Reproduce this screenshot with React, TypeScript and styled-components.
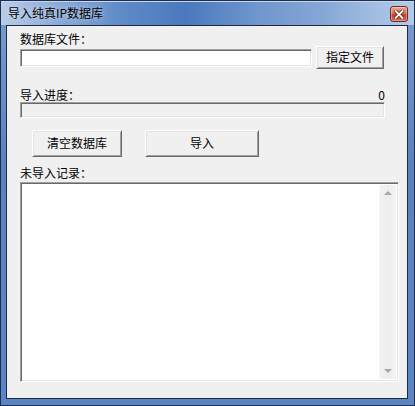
import React from "react";
import styled, { createGlobalStyle } from "styled-components";

const GlobalStyle = createGlobalStyle`
  html, body {
    margin: 0;
    padding: 0;
    background: #ffffff;
  }
  body {
    font-family: "Noto Sans CJK SC", "Liberation Sans", sans-serif;
    font-size: 12px;
    color: #000;
  }
`;

const sunken = `
  border: 1px solid;
  border-color: #a0a0a0 #ffffff #ffffff #a0a0a0;
  box-shadow: inset 1px 1px 0 #696969, inset -1px -1px 0 #e3e3e3;
`;

const Window = styled.div`
  width: 415px;
  height: 406px;
  box-sizing: border-box;
  border: 1px solid #1d2f4c;
  display: flex;
  flex-direction: column;
  background: linear-gradient(180deg, #7b9dd0 0%, #5a82bf 40%, #5b84c2 100%);
`;

const TitleBar = styled.div`
  height: 24px;
  flex: none;
  display: flex;
  align-items: center;
  justify-content: space-between;
  padding: 0 6px 0 7px;
  box-shadow: inset 0 1px 0 #c6d7ef;
  background: linear-gradient(
    90deg,
    #b8cce9 0%,
    #8fadd9 12%,
    #5d89c6 30%,
    #4a7abd 45%,
    #6f96cd 62%,
    #86a7d6 78%,
    #a6bfe3 92%,
    #b3c9e8 100%
  );
`;

const Title = styled.span`
  font-size: 12px;
  line-height: 14px;
  color: #000;
  text-shadow: 0 0 6px rgba(255, 255, 255, 0.7);
`;

const CloseButton = styled.div`
  width: 18px;
  height: 16px;
  margin-top: 2px;
  box-sizing: border-box;
  border: 1px solid #6e2a1e;
  border-radius: 3px;
  display: flex;
  align-items: center;
  justify-content: center;
  background: linear-gradient(180deg, #e9a894 0%, #d6715a 45%, #c2412a 55%, #d8674b 100%);
  box-shadow: inset 0 0 0 1px rgba(255, 255, 255, 0.35);
`;

const Body = styled.div`
  flex: 1;
  margin: 0 6px 6px 5px;
  border: 1px solid #1b2b46;
  background: #f0f0f0;
  display: flex;
  flex-direction: column;
  padding: 6px 0 0 13px;
`;

const Label = styled.div<{ $top?: number }>`
  line-height: 14px;
  height: 14px;
  margin-top: ${(p) => p.$top ?? 0}px;
  white-space: nowrap;
`;

const FileRow = styled.div`
  display: flex;
  align-items: center;
  gap: 4px;
  height: 23px;
`;

const TextField = styled.div`
  width: 292px;
  height: 18px;
  box-sizing: border-box;
  background: #ffffff;
  ${sunken}
`;

const Button = styled.div<{ $w: number; $h: number }>`
  width: ${(p) => p.$w}px;
  height: ${(p) => p.$h}px;
  box-sizing: border-box;
  display: flex;
  align-items: center;
  justify-content: center;
  background: #f0f0f0;
  border: 1px solid;
  border-color: #ffffff #696969 #696969 #ffffff;
  box-shadow: inset 1px 1px 0 #e3e3e3, inset -1px -1px 0 #a0a0a0;
  line-height: 14px;
  padding-bottom: 1px;
`;

const ProgressHeader = styled.div`
  width: 365px;
  display: flex;
  justify-content: space-between;
  line-height: 14px;
  height: 14px;
  margin-top: 19px;
`;

const ProgressBar = styled.div`
  width: 365px;
  height: 16px;
  box-sizing: border-box;
  background: #f0f0f0;
  ${sunken}
`;

const ButtonRow = styled.div`
  display: flex;
  gap: 23px;
  margin: 12px 0 0 12px;
`;

const LogBox = styled.div`
  width: 379px;
  height: 200px;
  margin-top: 2px;
  box-sizing: border-box;
  display: flex;
  padding: 2px;
  background: #ffffff;
  ${sunken}
`;

const LogArea = styled.div`
  flex: 1;
  background: #ffffff;
`;

const ScrollBar = styled.div`
  width: 17px;
  display: flex;
  flex-direction: column;
  justify-content: space-between;
  align-items: center;
  padding: 6px 0 6px;
  box-sizing: border-box;
  background: linear-gradient(90deg, #f2f2f2 0%, #ececec 50%, #f4f4f4 100%);
  border-left: 1px solid #f7f7f7;
`;

const Arrow = styled.div<{ $down?: boolean }>`
  width: 0;
  height: 0;
  border-left: 4px solid transparent;
  border-right: 4px solid transparent;
  ${(p) =>
    p.$down
      ? "border-top: 4px solid #a8a8a8;"
      : "border-bottom: 4px solid #a8a8a8;"}
`;

export default function App() {
  return (
    <>
      <GlobalStyle />
      <Window>
        <TitleBar>
          <Title>导入纯真IP数据库</Title>
          <CloseButton>
            <svg width="10" height="9" viewBox="0 0 10 9">
              <path
                d="M1.5 1 L8.5 8 M8.5 1 L1.5 8"
                stroke="#5a1a10"
                strokeWidth="3.4"
                strokeLinecap="square"
              />
              <path
                d="M1.5 1 L8.5 8 M8.5 1 L1.5 8"
                stroke="#ffffff"
                strokeWidth="1.8"
                strokeLinecap="square"
              />
            </svg>
          </CloseButton>
        </TitleBar>
        <Body>
          <Label>数据库文件：</Label>
          <FileRow>
            <TextField />
            <Button $w={68} $h={23}>指定文件</Button>
          </FileRow>
          <ProgressHeader>
            <span>导入进度：</span>
            <span>0</span>
          </ProgressHeader>
          <ProgressBar />
          <ButtonRow>
            <Button $w={90} $h={27}>清空数据库</Button>
            <Button $w={114} $h={27}>导入</Button>
          </ButtonRow>
          <Label $top={9}>未导入记录：</Label>
          <LogBox>
            <LogArea />
            <ScrollBar>
              <Arrow />
              <Arrow $down />
            </ScrollBar>
          </LogBox>
        </Body>
      </Window>
    </>
  );
}
